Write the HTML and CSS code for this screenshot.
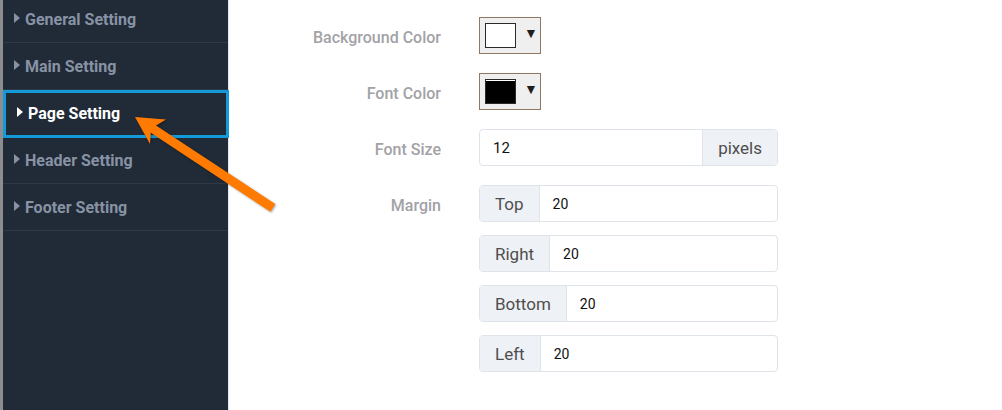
FILE: index.html
```html
<!DOCTYPE html>
<html>
<head>
<meta charset="utf-8">
<link rel="stylesheet" href="styles.css">
</head>
<body>
<div class="page">
  <div class="edge"></div>
  <nav class="sidebar">
    <ul class="menu">
      <li class="item"><span class="caret"></span>General Setting</li>
      <li class="item"><span class="caret"></span>Main Setting</li>
      <li class="item active"><span class="caret"></span>Page Setting</li>
      <li class="item"><span class="caret"></span>Header Setting</li>
      <li class="item"><span class="caret"></span>Footer Setting</li>
    </ul>
  </nav>
  <main class="main">
    <div class="form">
      <div class="label">Background Color</div>
      <div class="control">
        <div class="picker"><span class="swatch white"></span><span class="drop">▼</span></div>
      </div>

      <div class="label">Font Color</div>
      <div class="control">
        <div class="picker"><span class="swatch black"></span><span class="drop">▼</span></div>
      </div>

      <div class="label">Font Size</div>
      <div class="control">
        <div class="group"><span class="value big">12</span><span class="addon">pixels</span></div>
      </div>

      <div class="label">Margin</div>
      <div class="control stack">
        <div class="group"><span class="addon">Top</span><span class="value">20</span></div>
        <div class="group"><span class="addon">Right</span><span class="value">20</span></div>
        <div class="group"><span class="addon">Bottom</span><span class="value">20</span></div>
        <div class="group"><span class="addon">Left</span><span class="value">20</span></div>
      </div>
    </div>
  </main>
  <svg class="arrow" width="1002" height="410" viewBox="0 0 1002 410">
    <polygon points="135,117 166,119.5 156,125.6 275.3,204.1 270.3,211.7 150.8,132.8 150,144" fill="#ff7a00"/>
  </svg>
</div>
</body>
</html>
```
FILE: styles.css
```css
* { box-sizing: border-box; }
html, body { margin: 0; padding: 0; }
body {
  width: 1002px;
  height: 410px;
  overflow: hidden;
  background: #ffffff;
  font-family: Roboto, "Liberation Sans", sans-serif;
}
.page {
  position: relative;
  display: flex;
  height: 410px;
}
.edge {
  width: 3px;
  background: #8d8d8d;
  flex: none;
}
.sidebar {
  width: 226px;
  flex: none;
  background: #212a37;
  border-right: 1px solid #e3e9f0;
}
.menu {
  list-style: none;
  margin: -4px 0 0 0;
  padding: 0;
}
.item {
  position: relative;
  height: 47px;
  border-bottom: 1px solid #2e3846;
  display: flex;
  align-items: center;
  padding-left: 11px;
  padding-top: 1px;
  font-size: 16px;
  font-weight: 700;
  color: #8793a4;
}
.caret {
  width: 0;
  height: 0;
  border-top: 5.5px solid transparent;
  border-bottom: 5.5px solid transparent;
  border-left: 6px solid currentColor;
  margin-right: 5px;
  margin-top: -3px;
}
.item.active {
  color: #ffffff;
  padding-left: 14px;
}
.item.active::after {
  content: "";
  position: absolute;
  top: 0;
  left: 0;
  right: -1px;
  bottom: -2px;
  border: 3px solid #129bd8;
}
.main {
  flex: 1;
  padding-top: 17px;
}
.form {
  display: grid;
  grid-template-columns: 212px 299px;
  column-gap: 38px;
  row-gap: 19px;
  align-items: start;
}
.label {
  text-align: right;
  font-size: 16px;
  font-weight: 500;
  color: #a2a2a6;
  line-height: 32px;
  height: 37px;
  padding-top: 5px;
}
.control { display: flex; }
.stack {
  flex-direction: column;
  gap: 13px;
}
.picker {
  width: 62px;
  height: 37px;
  border: 1px solid #917660;
  background: #efefef;
  display: flex;
  align-items: center;
  padding-left: 5px;
}
.swatch {
  width: 31px;
  height: 25px;
  border: 1px solid #2a2a2a;
}
.swatch.white { background: #ffffff; }
.swatch.black { background: #000000; box-shadow: inset 0 1px 0 #ffffff, inset 0 2px 0 #000; }
.drop {
  font-size: 14px;
  color: #1e1e1e;
  margin-left: 8px;
  margin-top: -5px;
}
.group {
  width: 299px;
  height: 37px;
  border: 1px solid #dfe3ea;
  border-radius: 4px;
  display: flex;
  overflow: hidden;
}
.addon {
  background: #eef1f5;
  color: #4e4e4e;
  font-size: 17px;
  display: flex;
  align-items: center;
  padding: 0 15px;
  flex: none;
}
.value + .addon { border-left: 1px solid #dfe3ea; }
.addon + .value { border-left: 1px solid #dfe3ea; }
.value {
  flex: 1;
  display: flex;
  align-items: center;
  padding-left: 13px;
  font-size: 14px;
  color: #111111;
}
.value.big { font-size: 15px; }
.arrow {
  position: absolute;
  left: 0;
  top: 0;
  pointer-events: none;
  filter: drop-shadow(1px 1px 1px rgba(0,0,0,0.35));
}
```
